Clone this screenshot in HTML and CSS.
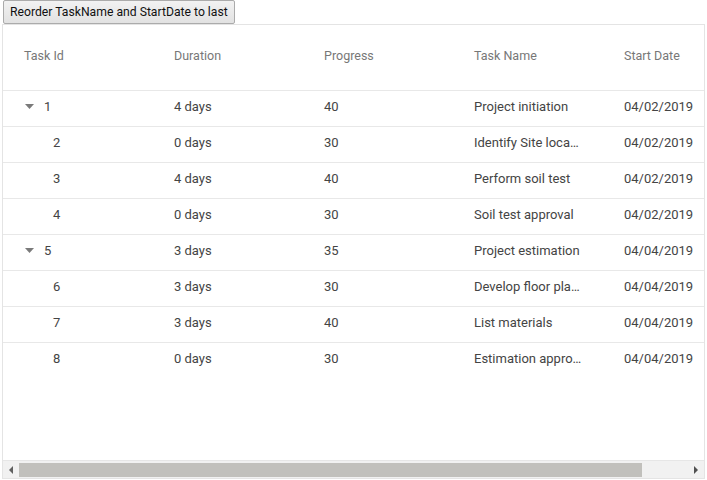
FILE: index.html
```html
<!DOCTYPE html>
<html>
<head>
<meta charset="utf-8">
<link rel="stylesheet" href="styles.css">
</head>
<body>
<div class="page">
  <button class="btn">Reorder TaskName and StartDate to last</button>
  <div class="grid">
    <div class="viewport">
      <div class="table">
        <div class="row header">
          <div class="cell">Task Id</div>
          <div class="cell">Duration</div>
          <div class="cell">Progress</div>
          <div class="cell">Task Name</div>
          <div class="cell">Start Date</div>
        </div>
        <div class="row">
          <div class="cell tree"><span class="exp"><svg width="9" height="5" viewBox="0 0 9 5"><path d="M0 0H9L4.5 5Z" fill="#7a7a7a"/></svg></span>1</div>
          <div class="cell">4 days</div>
          <div class="cell">40</div>
          <div class="cell">Project initiation</div>
          <div class="cell">04/02/2019</div>
        </div>
        <div class="row">
          <div class="cell tree"><span class="ind"></span>2</div>
          <div class="cell">0 days</div>
          <div class="cell">30</div>
          <div class="cell">Identify Site location</div>
          <div class="cell">04/02/2019</div>
        </div>
        <div class="row">
          <div class="cell tree"><span class="ind"></span>3</div>
          <div class="cell">4 days</div>
          <div class="cell">40</div>
          <div class="cell">Perform soil test</div>
          <div class="cell">04/02/2019</div>
        </div>
        <div class="row">
          <div class="cell tree"><span class="ind"></span>4</div>
          <div class="cell">0 days</div>
          <div class="cell">30</div>
          <div class="cell">Soil test approval</div>
          <div class="cell">04/02/2019</div>
        </div>
        <div class="row">
          <div class="cell tree"><span class="exp"><svg width="9" height="5" viewBox="0 0 9 5"><path d="M0 0H9L4.5 5Z" fill="#7a7a7a"/></svg></span>5</div>
          <div class="cell">3 days</div>
          <div class="cell">35</div>
          <div class="cell">Project estimation</div>
          <div class="cell">04/04/2019</div>
        </div>
        <div class="row">
          <div class="cell tree"><span class="ind"></span>6</div>
          <div class="cell">3 days</div>
          <div class="cell">30</div>
          <div class="cell">Develop floor plan for estimation</div>
          <div class="cell">04/04/2019</div>
        </div>
        <div class="row">
          <div class="cell tree"><span class="ind"></span>7</div>
          <div class="cell">3 days</div>
          <div class="cell">40</div>
          <div class="cell">List materials</div>
          <div class="cell">04/04/2019</div>
        </div>
        <div class="row last">
          <div class="cell tree"><span class="ind"></span>8</div>
          <div class="cell">0 days</div>
          <div class="cell">30</div>
          <div class="cell">Estimation approval</div>
          <div class="cell">04/04/2019</div>
        </div>
      </div>
    </div>
    <div class="hscroll">
      <div class="arrow left"><svg width="4" height="8" viewBox="0 0 4 8"><path d="M4 0V8L0 4Z" fill="#606060"/></svg></div>
      <div class="track"><div class="thumb"></div></div>
      <div class="arrow right"><svg width="4" height="8" viewBox="0 0 4 8"><path d="M0 0V8L4 4Z" fill="#505050"/></svg></div>
    </div>
  </div>
</div>
</body>
</html>
```
FILE: styles.css
```css
html, body {
  margin: 0;
  padding: 0;
  background: #fff;
}
.page {
  padding: 0 2px;
  font-family: Roboto, "Liberation Sans", sans-serif;
}
.btn {
  display: block;
  height: 24px;
  margin: 0 0 0 1px;
  padding: 0 6px;
  font-family: Roboto, "Liberation Sans", sans-serif;
  font-size: 12.2px;
  color: #111;
  background: linear-gradient(#f2f2f2, #e2e2e2);
  border: 1px solid #ababab;
  border-radius: 2px;
  box-sizing: border-box;
}
.grid {
  width: 703px;
  height: 455px;
  box-sizing: border-box;
  border: 1px solid #e4e4e4;
  display: flex;
  flex-direction: column;
}
.viewport {
  flex: 1;
  overflow: hidden;
}
.table {
  width: 750px;
}
.row {
  display: flex;
  height: 35px;
  border-bottom: 1px solid #e8e8e8;
  font-size: 13px;
  color: #444;
}
.row.last {
  border-bottom: none;
}
.row.header {
  height: 60px;
  padding-bottom: 5px;
  color: #777;
  font-size: 12.5px;
}
.cell {
  width: 150px;
  flex: none;
  box-sizing: border-box;
  padding: 0 21px;
  display: flex;
  align-items: center;
  white-space: nowrap;
  overflow: hidden;
}
.cell:not(.tree) {
  display: block;
  line-height: 31px;
  text-overflow: ellipsis;
}
.header .cell:not(.tree),
.header .cell {
  display: flex;
  align-items: center;
  line-height: normal;
}
.tree {
  padding-bottom: 4px;
}
.exp {
  width: 20px;
  flex: none;
  display: flex;
  align-items: center;
  padding-left: 1px;
  box-sizing: border-box;
}
.ind {
  width: 29px;
  flex: none;
}
.hscroll {
  height: 17px;
  flex: none;
  display: flex;
  background: #f1f1f1;
  border-top: 1px solid #e6e6e6;
}
.arrow {
  width: 16px;
  flex: none;
  display: flex;
  align-items: center;
  justify-content: center;
}
.track {
  flex: 1;
  display: flex;
  align-items: center;
}
.thumb {
  width: 623px;
  height: 14px;
  background: #c1c0bc;
}
```
